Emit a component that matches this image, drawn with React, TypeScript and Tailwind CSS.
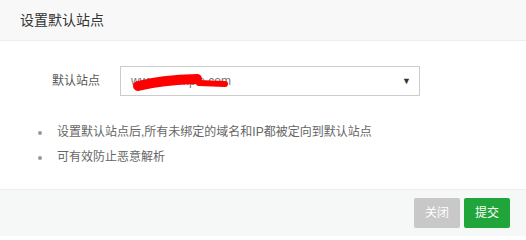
import React from "react";

const font = { fontFamily: '"Liberation Sans", "Noto Sans CJK SC", sans-serif' };

export default function App() {
  return (
    <div
      className="w-[526px] h-[236px] flex flex-col bg-white overflow-hidden"
      style={font}
    >
      {/* Header */}
      <div className="h-[41px] shrink-0 flex items-center px-5 bg-[#f8f8f8] border-b border-[#eeeeee] text-[14px] text-[#333]">
        设置默认站点
      </div>

      {/* Body */}
      <div className="flex-1 pt-[25px]">
        <div className="flex items-center h-[30px]">
          <div className="w-[100px] text-right text-[12px] text-[#555]">默认站点</div>
          <div className="relative ml-[20px] w-[300px] h-[30px] border border-[#cccccc] flex items-center pl-[10px] pr-[8px]">
            <span className="text-[12px] text-[#777] flex-1">www.example.com</span>
            <span className="text-[9px] text-[#333] leading-none">▼</span>
            {/* redaction scribble */}
            <svg
              className="absolute left-0 top-0 w-[298px] h-[28px] pointer-events-none"
              viewBox="0 0 298 28"
            >
              <path
                d="M17 19 Q40 13 76 12"
                stroke="#ff0000"
                strokeWidth="10"
                strokeLinecap="round"
                fill="none"
              />
              <path
                d="M78 16 L104 17"
                stroke="#ff0000"
                strokeWidth="6"
                strokeLinecap="round"
                fill="none"
              />
            </svg>
          </div>
        </div>

        <ul className="mt-[24px] pl-[38px] text-[12px] text-[#666] leading-[25px]">
          <li className="flex items-center">
            <span className="w-[4px] h-[4px] rounded-full bg-[#999] mr-[15px]" />
            设置默认站点后,所有未绑定的域名和IP都被定向到默认站点
          </li>
          <li className="flex items-center">
            <span className="w-[4px] h-[4px] rounded-full bg-[#999] mr-[15px]" />
            可有效防止恶意解析
          </li>
        </ul>
      </div>

      {/* Footer */}
      <div className="h-[47px] shrink-0 flex items-center justify-end gap-[4px] pr-[16px] bg-[#f6f8f8] border-t border-[#eeeeee]">
        <button className="w-[46px] h-[30px] rounded-[2px] bg-[#c8c8c8] text-white text-[12px]">
          关闭
        </button>
        <button className="w-[46px] h-[30px] rounded-[2px] bg-[#20a53a] text-white text-[12px]">
          提交
        </button>
      </div>
    </div>
  );
}
